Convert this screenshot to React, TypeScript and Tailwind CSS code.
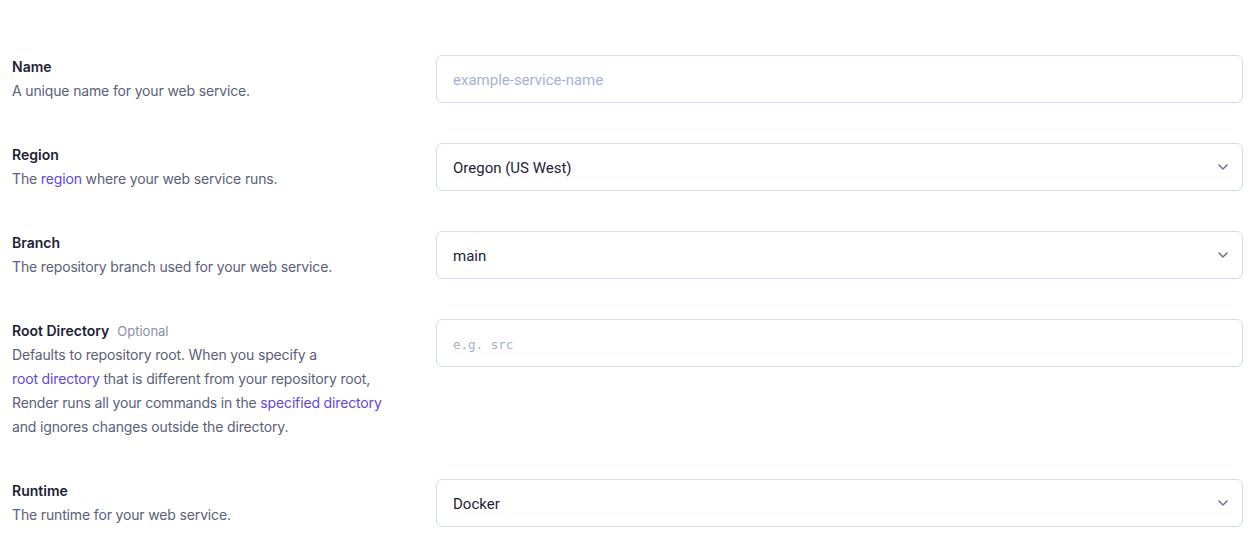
import { ChevronDown } from "lucide-react";

function Field({
  label,
  optional,
  children,
  control,
}: {
  label: string;
  optional?: boolean;
  children: React.ReactNode;
  control: React.ReactNode;
}) {
  return (
    <div className="flex">
      <div className="w-[424px] shrink-0 font-['Inter',sans-serif] text-[14px] leading-6">
        <div className="flex items-baseline gap-2">
          <span className="font-semibold text-[#1e2235]">{label}</span>
          {optional && <span className="text-[13px] text-[#8b8fa6]">Optional</span>}
        </div>
        <div className="tracking-[-0.15px] text-[#5b6079]">{children}</div>
      </div>
      <div className="flex-1">{control}</div>
    </div>
  );
}

function TextInput({ placeholder, mono }: { placeholder: string; mono?: boolean }) {
  return (
    <input
      placeholder={placeholder}
      className={
        "h-12 w-full rounded-md border border-[#d3dcef] bg-white px-4 pt-[2px] outline-none " +
        (mono
          ? "font-['DejaVu_Sans_Mono',monospace] text-[12.5px] placeholder:text-[#a5aecd]"
          : "font-['Roboto',sans-serif] text-[15px] placeholder:text-[#a9b1d3]")
      }
    />
  );
}

function Select({ value }: { value: string }) {
  return (
    <div className="flex h-12 w-full items-center justify-between rounded-md border border-[#d3dcef] bg-white pl-4 pr-[11px] font-['Roboto',sans-serif] text-[15px] text-[#1e2235]">
      <span className="pt-[2px]">{value}</span>
      <ChevronDown size={16} strokeWidth={2.25} className="text-[#6f7488]" />
    </div>
  );
}

function Link({ children }: { children: React.ReactNode }) {
  return <span className="text-[#6145e8]">{children}</span>;
}

export default function App() {
  return (
    <div className="flex min-h-screen flex-col gap-10 bg-white pt-[55px] pl-3 pr-[15px]">
      <Field label="Name" control={<TextInput placeholder="example-service-name" />}>
        A unique name for your web service.
      </Field>
      <Field label="Region" control={<Select value="Oregon (US West)" />}>
        The <Link>region</Link> where your web service runs.
      </Field>
      <Field label="Branch" control={<Select value="main" />}>
        The repository branch used for your web service.
      </Field>
      <Field label="Root Directory" optional control={<TextInput placeholder="e.g. src" mono />}>
        Defaults to repository root. When you specify a
        <br />
        <Link>root directory</Link> that is different from your repository root,
        <br />
        Render runs all your commands in the <Link>specified directory</Link>
        <br />
        and ignores changes outside the directory.
      </Field>
      <Field label="Runtime" control={<Select value="Docker" />}>
        The runtime for your web service.
      </Field>
    </div>
  );
}
